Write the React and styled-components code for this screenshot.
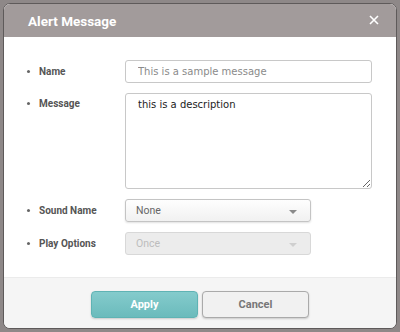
import React from "react";
import styled, { createGlobalStyle } from "styled-components";

const Global = createGlobalStyle`
  html, body {
    margin: 0;
    padding: 0;
    background: #8e8888;
    font-family: Roboto, "Liberation Sans", sans-serif;
  }
  * { box-sizing: border-box; }
`;

const Page = styled.div`
  width: 400px;
  height: 332px;
  padding: 3px;
`;

const Dialog = styled.div`
  width: 394px;
  height: 326px;
  border: 1px solid #5e5a5a;
  border-radius: 7px;
  overflow: hidden;
  background: #fff;
  display: flex;
  flex-direction: column;
`;

const Header = styled.div`
  height: 33px;
  background: #a29b9b;
  display: flex;
  align-items: center;
  justify-content: space-between;
  padding: 0 17px 0 24px;
`;

const Title = styled.h1`
  margin: 0;
  font-size: 13.5px;
  font-weight: 700;
  color: #fff;
`;

const Close = styled.button`
  border: 0;
  background: none;
  padding: 0;
  width: 10px;
  height: 10px;
  display: flex;
  margin-top: -2px;
`;

const Body = styled.div`
  flex: 1;
  padding-top: 23px;
  display: flex;
  flex-direction: column;
  gap: 10px;
`;

const Row = styled.div`
  display: flex;
  align-items: ${(p) => (p.top ? "flex-start" : "center")};
`;

const Label = styled.div`
  width: 121px;
  padding-left: 23px;
  font-size: 10px;
  font-weight: 700;
  color: #555;
  display: flex;
  align-items: center;
  padding-top: ${(p) => (p.top ? "5px" : "0")};
  &::before {
    content: "";
    width: 3px;
    height: 3px;
    border-radius: 50%;
    background: #666;
    margin-right: 9px;
  }
`;

const TextInput = styled.input`
  width: 247px;
  height: 23px;
  border: 1px solid #c8c8c8;
  border-radius: 3px;
  padding: 0 12px;
  font-family: "DejaVu Sans", "Open Sans", sans-serif;
  font-size: 10px;
  color: #333;
  &::placeholder { color: #8a8a8a; }
`;

const TextArea = styled.textarea`
  width: 247px;
  height: 96px;
  border: 1px solid #c8c8c8;
  border-radius: 3px;
  padding: 5px 12px;
  font-family: "DejaVu Sans", "Open Sans", sans-serif;
  font-size: 10px;
  color: #222;
  resize: vertical;
  margin: 0;
  display: block;
`;

const Select = styled.div`
  width: 186px;
  height: 23px;
  border: 1px solid ${(p) => (p.disabled ? "#d8d8d8" : "#c4c4c4")};
  border-radius: 3px;
  background: ${(p) =>
    p.disabled ? "#ececec" : "linear-gradient(#fefefe, #f1f1f1)"};
  box-shadow: ${(p) => (p.disabled ? "none" : "0 1px 2px rgba(0,0,0,0.12)")};
  display: flex;
  align-items: center;
  justify-content: space-between;
  padding: 0 13px 0 10px;
  font-size: 10.5px;
  color: ${(p) => (p.disabled ? "#bdbdbd" : "#666")};
`;

const Caret = styled.span`
  width: 0;
  height: 0;
  border-left: 4px solid transparent;
  border-right: 4px solid transparent;
  border-top: 4px solid ${(p) => (p.disabled ? "#cfcfcf" : "#8a8a8a")};
  margin-top: 2px;
`;

const Footer = styled.div`
  height: 51px;
  background: #f5f5f5;
  border-top: 1px solid #ebebeb;
  display: flex;
  justify-content: center;
  align-items: flex-start;
  padding-top: 13px;
  gap: 4px;
`;

const Button = styled.button`
  width: 107px;
  height: 27px;
  border-radius: 4px;
  font-family: Roboto, "Liberation Sans", sans-serif;
  font-size: 11px;
  font-weight: 700;
  border: 1px solid ${(p) => (p.primary ? "#5fb3b4" : "#aaa")};
  background: ${(p) =>
    p.primary ? "linear-gradient(#84cbcc, #6bbbbc)" : "#f1f1f1"};
  color: ${(p) => (p.primary ? "#fff" : "#777")};
  box-shadow: 0 1px 2px rgba(0, 0, 0, 0.18);
`;

export default function App() {
  return (
    <>
      <Global />
      <Page>
        <Dialog>
          <Header>
            <Title>Alert Message</Title>
            <Close aria-label="close">
              <svg width="10" height="10" viewBox="0 0 10 10">
                <path d="M1 1L9 9M9 1L1 9" stroke="#fff" strokeWidth="1.6" />
              </svg>
            </Close>
          </Header>
          <Body>
            <Row>
              <Label>Name</Label>
              <TextInput placeholder="This is a sample message" />
            </Row>
            <Row top>
              <Label top>Message</Label>
              <TextArea defaultValue="this is a description" />
            </Row>
            <Row>
              <Label>Sound Name</Label>
              <Select>
                None
                <Caret />
              </Select>
            </Row>
            <Row>
              <Label>Play Options</Label>
              <Select disabled>
                Once
                <Caret disabled />
              </Select>
            </Row>
          </Body>
          <Footer>
            <Button primary>Apply</Button>
            <Button>Cancel</Button>
          </Footer>
        </Dialog>
      </Page>
    </>
  );
}
